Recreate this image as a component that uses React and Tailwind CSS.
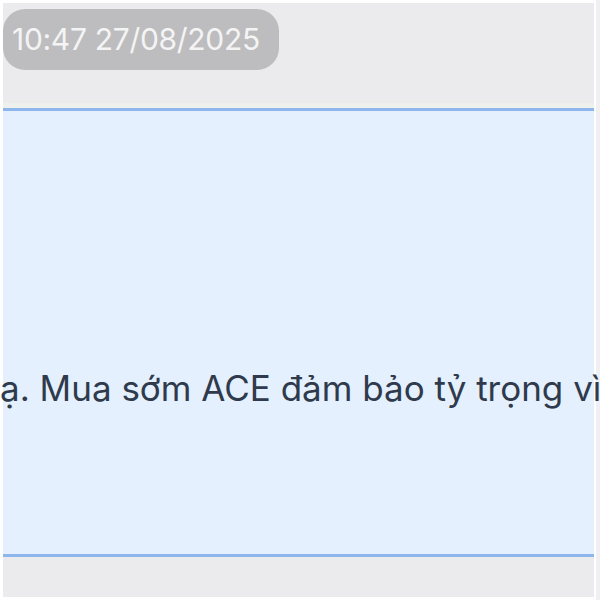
const App = () => {
    return (
        <div className="w-[600px] h-[600px] bg-[#f6f6f8] overflow-hidden flex" style={{ fontFamily: "Inter, 'Noto Sans', sans-serif" }}>
            <div className="w-[3px] bg-white" />
            <div className="flex-1 min-w-0 flex flex-col bg-[#ebebed] border-t-[3px] border-white">
                <div className="h-[100px] pt-[6px]">
                    <div className="h-[61px] w-[276px] rounded-[22px] bg-[#bdbdbf] flex items-center pl-[9px]">
                        <span className="text-[30px] text-[#f4f4f4] tracking-[-0.3px]">10:47 27/08/2025</span>
                    </div>
                </div>
                <div className="h-[5px] bg-[#eef0ec]" />
                <div className="border-y-[3px] border-[#8db6ec] bg-[#e4f0fd] h-[449px] pt-[256px]">
                    <p className="relative z-10 whitespace-nowrap text-[35px] leading-[42px] text-[#2f3a4c] -ml-[3px]">ạ. Mua sớm ACE đảm bảo tỷ trọng vì</p>
                </div>
                <div className="flex-1 border-b-[3px] border-white" />
            </div>
            <div className="w-[2px] bg-white" />
            <div className="w-[4px] bg-[#f0f0f4]" />
        </div>
    )
}

export default App;
